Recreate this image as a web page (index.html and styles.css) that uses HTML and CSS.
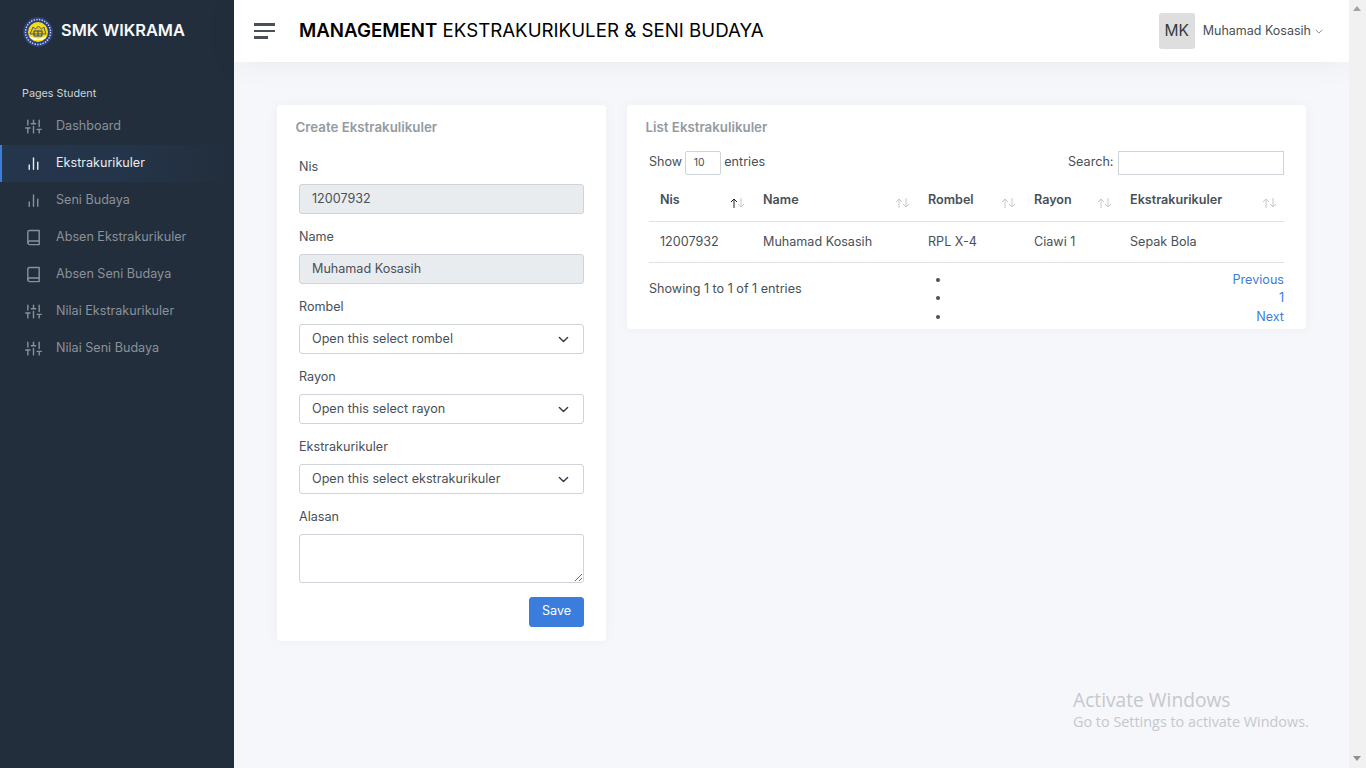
FILE: index.html
```html
<!DOCTYPE html>
<html lang="en">
<head>
<meta charset="utf-8">
<title>Management Ekstrakurikuler</title>
<link rel="stylesheet" href="styles.css">
</head>
<body>
<div class="app">
  <aside class="sidebar">
    <div class="brand">
      <svg class="logo" viewBox="0 0 30 30"><circle cx="15" cy="15" r="15" fill="#2c3f7f"/><circle cx="15" cy="15" r="12.500" fill="none" stroke="#c8cfe0" stroke-width="1.500" stroke-dasharray="1.500 1.200"/><circle cx="15" cy="15" r="10" fill="#f4dc17"/><path d="M7 17l3-7 2.500 2 3-3 3 3 2.500-2 2 7z" fill="#e8c80f" stroke="#2c3f7f" stroke-width=".8"/><path d="M11 14h8v5h-8zM15 14v5" fill="none" stroke="#2c3f7f"/><path d="M7 20q8 5 16 0" fill="none" stroke="#fff" stroke-width="1.500"/></svg>
      <span>SMK WIKRAMA</span>
    </div>
    <div class="nav-head">Pages Student</div>
    <nav class="nav">
      <a class="nav-item"><svg class="ic" viewBox="0 0 24 24"><path d="M4 21v-7M4 10V3M12 21v-9M12 8V3M20 21v-5M20 12V3M1 14h6M9 8h6M17 16h6"/></svg>Dashboard</a>
      <a class="nav-item active"><svg class="ic" viewBox="0 0 24 24"><path d="M18 20V10M12 20V4M6 20v-6"/></svg>Ekstrakurikuler</a>
      <a class="nav-item"><svg class="ic" viewBox="0 0 24 24"><path d="M18 20V10M12 20V4M6 20v-6"/></svg>Seni Budaya</a>
      <a class="nav-item"><svg class="ic" viewBox="0 0 24 24"><path d="M4 19.500A2.500 2.500 0 0 1 6.500 17H20"/><path d="M6.500 2H20v20H6.500A2.500 2.500 0 0 1 4 19.500v-15A2.500 2.500 0 0 1 6.500 2z"/></svg>Absen Ekstrakurikuler</a>
      <a class="nav-item"><svg class="ic" viewBox="0 0 24 24"><path d="M4 19.500A2.500 2.500 0 0 1 6.500 17H20"/><path d="M6.500 2H20v20H6.500A2.500 2.500 0 0 1 4 19.500v-15A2.500 2.500 0 0 1 6.500 2z"/></svg>Absen Seni Budaya</a>
      <a class="nav-item"><svg class="ic" viewBox="0 0 24 24"><path d="M4 21v-7M4 10V3M12 21v-9M12 8V3M20 21v-5M20 12V3M1 14h6M9 8h6M17 16h6"/></svg>Nilai Ekstrakurikuler</a>
      <a class="nav-item"><svg class="ic" viewBox="0 0 24 24"><path d="M4 21v-7M4 10V3M12 21v-9M12 8V3M20 21v-5M20 12V3M1 14h6M9 8h6M17 16h6"/></svg>Nilai Seni Budaya</a>
    </nav>
  </aside>
  <div class="main">
    <header class="topbar">
      <div class="hamburger"><i class="bar"></i><i class="bar"></i><i class="bar short"></i></div>
      <h1 class="page-title"><strong>MANAGEMENT</strong> EKSTRAKURIKULER &amp; SENI BUDAYA</h1>
      <div class="user">
        <div class="avatar">MK</div>
        <span class="user-name">Muhamad Kosasih</span>
        <svg class="caret" viewBox="0 0 10 6"><path d="M1 1l4 4 4-4"/></svg>
      </div>
    </header>
    <main class="content">
      <section class="card form-card">
        <h2 class="card-title">Create Ekstrakulikuler</h2>
        <form class="form">
          <div class="field"><label>Nis</label><div class="input disabled">12007932</div></div>
          <div class="field"><label>Name</label><div class="input disabled">Muhamad Kosasih</div></div>
          <div class="field"><label>Rombel</label><div class="input select">Open this select rombel<svg class="chev" viewBox="0 0 16 16"><path d="M2 5l6 6 6-6"/></svg></div></div>
          <div class="field"><label>Rayon</label><div class="input select">Open this select rayon<svg class="chev" viewBox="0 0 16 16"><path d="M2 5l6 6 6-6"/></svg></div></div>
          <div class="field"><label>Ekstrakurikuler</label><div class="input select">Open this select ekstrakurikuler<svg class="chev" viewBox="0 0 16 16"><path d="M2 5l6 6 6-6"/></svg></div></div>
          <div class="field field-tall"><label>Alasan</label><textarea class="textarea"></textarea></div>
          <div class="actions"><button class="btn" type="button">Save</button></div>
        </form>
      </section>
      <section class="card list-card">
        <h2 class="card-title">List Ekstrakulikuler</h2>
        <div class="dt-controls">
          <div class="dt-length">Show <span class="dt-select">10</span> entries</div>
          <div class="dt-search">Search: <span class="dt-input"></span></div>
        </div>
        <table class="table">
          <thead>
            <tr>
              <th class="c1">Nis<svg class="sort" viewBox="0 0 15 10"><path class="up on" d="M4 10V1M1 4l3-3 3 3"/><path class="dn" d="M11 0v9M8 6l3 3 3-3"/></svg></th>
              <th class="c2">Name<svg class="sort" viewBox="0 0 15 10"><path class="up" d="M4 10V1M1 4l3-3 3 3"/><path class="dn" d="M11 0v9M8 6l3 3 3-3"/></svg></th>
              <th class="c3">Rombel<svg class="sort" viewBox="0 0 15 10"><path class="up" d="M4 10V1M1 4l3-3 3 3"/><path class="dn" d="M11 0v9M8 6l3 3 3-3"/></svg></th>
              <th class="c4">Rayon<svg class="sort" viewBox="0 0 15 10"><path class="up" d="M4 10V1M1 4l3-3 3 3"/><path class="dn" d="M11 0v9M8 6l3 3 3-3"/></svg></th>
              <th class="c5">Ekstrakurikuler<svg class="sort" viewBox="0 0 15 10"><path class="up" d="M4 10V1M1 4l3-3 3 3"/><path class="dn" d="M11 0v9M8 6l3 3 3-3"/></svg></th>
            </tr>
          </thead>
          <tbody>
            <tr><td>12007932</td><td>Muhamad Kosasih</td><td>RPL X-4</td><td>Ciawi 1</td><td>Sepak Bola</td></tr>
          </tbody>
        </table>
        <div class="dt-foot">
          <div class="dt-info">Showing 1 to 1 of 1 entries</div>
          <ul class="pager">
            <li><a>Previous</a></li>
            <li><a>1</a></li>
            <li><a>Next</a></li>
          </ul>
        </div>
      </section>
    </main>
  </div>
  <div class="scrollbar"><span class="arrow up"></span><span class="arrow down"></span></div>
</div>
<div class="watermark"><div class="wm-title">Activate Windows</div><div class="wm-sub">Go to Settings to activate Windows.</div></div>
</body>
</html>
```
FILE: styles.css
```css
* { box-sizing: border-box; }
html, body { margin: 0; height: 100%; overflow: hidden; }
body { font-family: Inter, "Liberation Sans", sans-serif; font-size: 12.6px; line-height: 19.5px; color: #495057; background: #f5f7fb; }
.app { display: flex; height: 768px; }
.sidebar { width: 234px; flex: none; background: #222e3c; color: #fff; }
.brand { display: flex; align-items: center; gap: 8px; height: 62px; padding-left: 23px; font-size: 16.4px; font-weight: 600; color: #f8f9fa; }
.logo { width: 30px; height: 30px; flex: none; margin-top: 2px; }
.nav-head { padding: 21.5px 22px 0; font-size: 10.8px; line-height: 19px; color: #ced4da; }
.nav { display: flex; flex-direction: column; margin-top: 5px; }
.nav-item { display: flex; align-items: center; height: 37px; padding-left: 25px; color: #8a9199; gap: 14px; }
.nav-item.active { color: #e9ecef; border-left: 2px solid #3b7ddd; padding-left: 23px; background: linear-gradient(90deg, rgba(59,125,221,.1), rgba(59,125,221,.088) 50%, rgba(0,0,0,0)); }
.ic { width: 17px; height: 17px; flex: none; fill: none; stroke: #8a9199; stroke-width: 2; stroke-linecap: round; stroke-linejoin: round; }
.active .ic { stroke: #e9ecef; }
.main { flex: 1; min-width: 0; display: flex; flex-direction: column; }
.topbar { height: 62px; background: #fff; display: flex; align-items: center; padding: 0 26px 0 20px; box-shadow: 0 0 33px rgba(0,0,0,.06); }
.hamburger { width: 21px; display: flex; flex-direction: column; gap: 4px; }
.bar { display: block; height: 2.500px; width: 21px; background: #495057; }
.bar.short { width: 14px; }
.page-title { margin: 0 0 0 24px; font-size: 18.7px; line-height: 24px; font-weight: 400; color: #000; flex: 1; }
.page-title strong { font-weight: 600; }
.user { display: flex; align-items: center; }
.avatar { width: 36px; height: 36px; border-radius: 3px; background: #dedede; display: flex; align-items: center; justify-content: center; font-size: 15.500px; color: #343a40; }
.user-name { margin-left: 8px; font-size: 12.5px; color: #495057; }
.caret { width: 8px; height: 5px; margin-left: 4px; fill: none; stroke: #6c757d; stroke-width: 1; }
.content { flex: 1; padding: 43px 43px 0; display: flex; align-items: flex-start; gap: 21px; }
.card { background: #fff; border-radius: 4px; box-shadow: 0 0 14px rgba(33,37,41,.04); }
.card-title { margin: 0; font-size: 13.3px; line-height: 15px; font-weight: 600; color: #939ba2; }
.form-card { width: 329px; height: 536px; padding: 15px 22px 0 18.5px; }
.form { margin: 0 0 0 3.5px; }
.field { height: 70px; }
.form .field:first-child { margin-top: 22px; }
.field label { display: block; height: 27px; line-height: 19px; }
.field-tall { height: 76px; }
.input { height: 30px; border: 1px solid #ced4da; border-radius: 3px; padding: 0 12px; display: flex; align-items: center; color: #495057; position: relative; }
.input.disabled { background: #e9ecef; }
.chev { position: absolute; right: 14px; top: 9px; width: 11px; height: 11px; fill: none; stroke: #343a40; stroke-width: 2; stroke-linecap: round; stroke-linejoin: round; }
.textarea { display: block; width: 100%; height: 49px; border: 1px solid #ced4da; border-radius: 3px; background: #fff; resize: vertical; margin: 0; padding: 4px 12px; font: inherit; }
.actions { display: flex; justify-content: flex-end; margin-top: 14px; }
.btn { width: 55px; height: 30px; border: 1px solid #3b7ddd; border-radius: 3px; background: #3b7ddd; color: #fff; font: inherit; padding: 0 0 2px; }
.list-card { width: 679px; height: 224px; padding: 15px 22px 0 18.5px; }
.dt-controls { display: flex; justify-content: space-between; align-items: center; height: 24px; margin: 15px 0 0 3.5px; }
.dt-length, .dt-search { display: flex; align-items: center; white-space: pre; }
.dt-select { display: flex; align-items: center; width: 36px; height: 24px; margin: 2px 0 0 -1px; border: 1px solid #ced4da; border-radius: 2px; padding-left: 8px; font-size: 10.500px; }
.dt-input { display: block; width: 166px; height: 24px; margin: 2px 0 0 1px; border: 1px solid #ced4da; }
.table { width: 635px; margin: 9px 0 0 3.5px; border-collapse: collapse; table-layout: fixed; }
.table th { position: relative; height: 38px; text-align: left; font-weight: 600; padding: 0 11px 4px; border-bottom: 1px solid #dee2e6; color: #495057; }
.table td { height: 41px; padding: 0 11px; border-bottom: 1px solid #dee2e6; }
.c1 { width: 103px; } .c2 { width: 165px; } .c3 { width: 106px; } .c4 { width: 96px; } .c5 { width: 165px; }
.sort { position: absolute; right: 7px; top: 15px; width: 15px; height: 10px; fill: none; stroke: #c4c8cc; stroke-width: 1; }
.sort .on { stroke: #212529; }
.dt-foot { display: flex; margin-left: 3.5px; width: 635px; }
.dt-info { width: 281px; padding-top: 16px; }
.pager { flex: 1; margin: 0; padding: 8px 0 0 21px; line-height: 18.500px; }
.pager li { text-align: right; }
.pager a { color: #3b7ddd; }
.scrollbar { width: 17px; flex: none; background: #f1f1f1; position: relative; }
.arrow { position: absolute; left: 4px; width: 0; height: 0; border-left: 4px solid transparent; border-right: 4px solid transparent; }
.arrow.up { top: 6px; border-bottom: 5px solid #a3a3a3; }
.arrow.down { bottom: 7px; border-top: 5px solid #8f8f8f; }
.watermark { position: absolute; left: 1073px; top: 688px; color: #c6c8cc; }
.wm-title { font-family: "Open Sans", sans-serif; font-size: 19.2px; line-height: 24px; }
.wm-sub { font-family: "Open Sans", sans-serif; font-size: 14.4px; line-height: 20px; }
```
